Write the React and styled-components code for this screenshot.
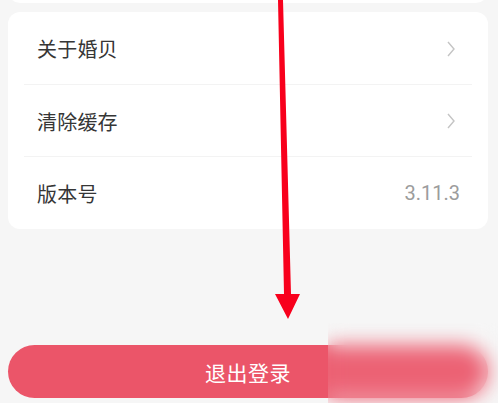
import React from "react";
import styled, { createGlobalStyle } from "styled-components";

const Global = createGlobalStyle`
  html, body { margin: 0; padding: 0; background: #f6f6f6; }
  body { font-family: "Noto Sans CJK SC", "Noto Sans", sans-serif; }
`;

const Page = styled.div`
  position: relative;
  width: 498px;
  height: 403px;
  overflow: hidden;
  padding: 0 10px 0 8px;
  box-sizing: border-box;
  display: flex;
  flex-direction: column;
`;

const Card = styled.div`
  background: #ffffff;
  border-radius: 12px;
  display: flex;
  flex-direction: column;
`;

const TopStub = styled(Card)`
  height: 40px;
  margin-top: -37px;
  flex-shrink: 0;
`;

const MainCard = styled(Card)`
  margin-top: 9px;
  flex-shrink: 0;
`;

const Row = styled.div`
  height: ${(p) => p.$h}px;
  display: flex;
  align-items: center;
  justify-content: space-between;
  padding: 0 28px 0 29px;
  position: relative;
  ${(p) =>
    p.$divider &&
    `
    &::after {
      content: "";
      position: absolute;
      left: 16px;
      right: 16px;
      bottom: 0;
      height: 1px;
      background: #f3f3f3;
    }
  `}
`;

const Label = styled.span`
  font-size: 20px;
  color: #363636;
  letter-spacing: 0.2px;
`;

const Value = styled.span`
  font-family: Roboto, "Noto Sans", sans-serif;
  font-size: 20px;
  color: #9c9c9c;
`;

const Chevron = () => (
  <svg width="10" height="18" viewBox="0 0 10 18" style={{ marginRight: 4 }}>
    <path d="M2 2 L8 9 L2 16" fill="none" stroke="#c4c4c4" strokeWidth="1.4" />
  </svg>
);

const LogoutButton = styled.div`
  margin-top: 116px;
  height: 53px;
  border-radius: 27px;
  background: #eb5569;
  color: #ffffff;
  font-size: 21px;
  display: flex;
  align-items: center;
  justify-content: center;
  letter-spacing: 0.5px;
  flex-shrink: 0;
`;

const Blur = styled.div`
  position: absolute;
  left: 328px;
  top: 323px;
  width: 170px;
  height: 80px;
  backdrop-filter: blur(10px);
  -webkit-backdrop-filter: blur(10px);
  background: rgba(255, 255, 255, 0.08);
`;

const Arrow = styled.svg`
  position: absolute;
  left: 0;
  top: 0;
  pointer-events: none;
`;

export default function App() {
  return (
    <>
      <Global />
      <Page>
        <TopStub />
        <MainCard>
          <Row $h={73} $divider>
            <Label>关于婚贝</Label>
            <Chevron />
          </Row>
          <Row $h={72} $divider>
            <Label>清除缓存</Label>
            <Chevron />
          </Row>
          <Row $h={72}>
            <Label>版本号</Label>
            <Value>3.11.3</Value>
          </Row>
        </MainCard>
        <LogoutButton>退出登录</LogoutButton>
        <Blur />
        <Arrow width="498" height="403" viewBox="0 0 498 403">
          <polygon
            points="278,0 283,0 291,294 300,294 288,319 275,294 284,294"
            fill="#f8001c"
          />
        </Arrow>
      </Page>
    </>
  );
}
